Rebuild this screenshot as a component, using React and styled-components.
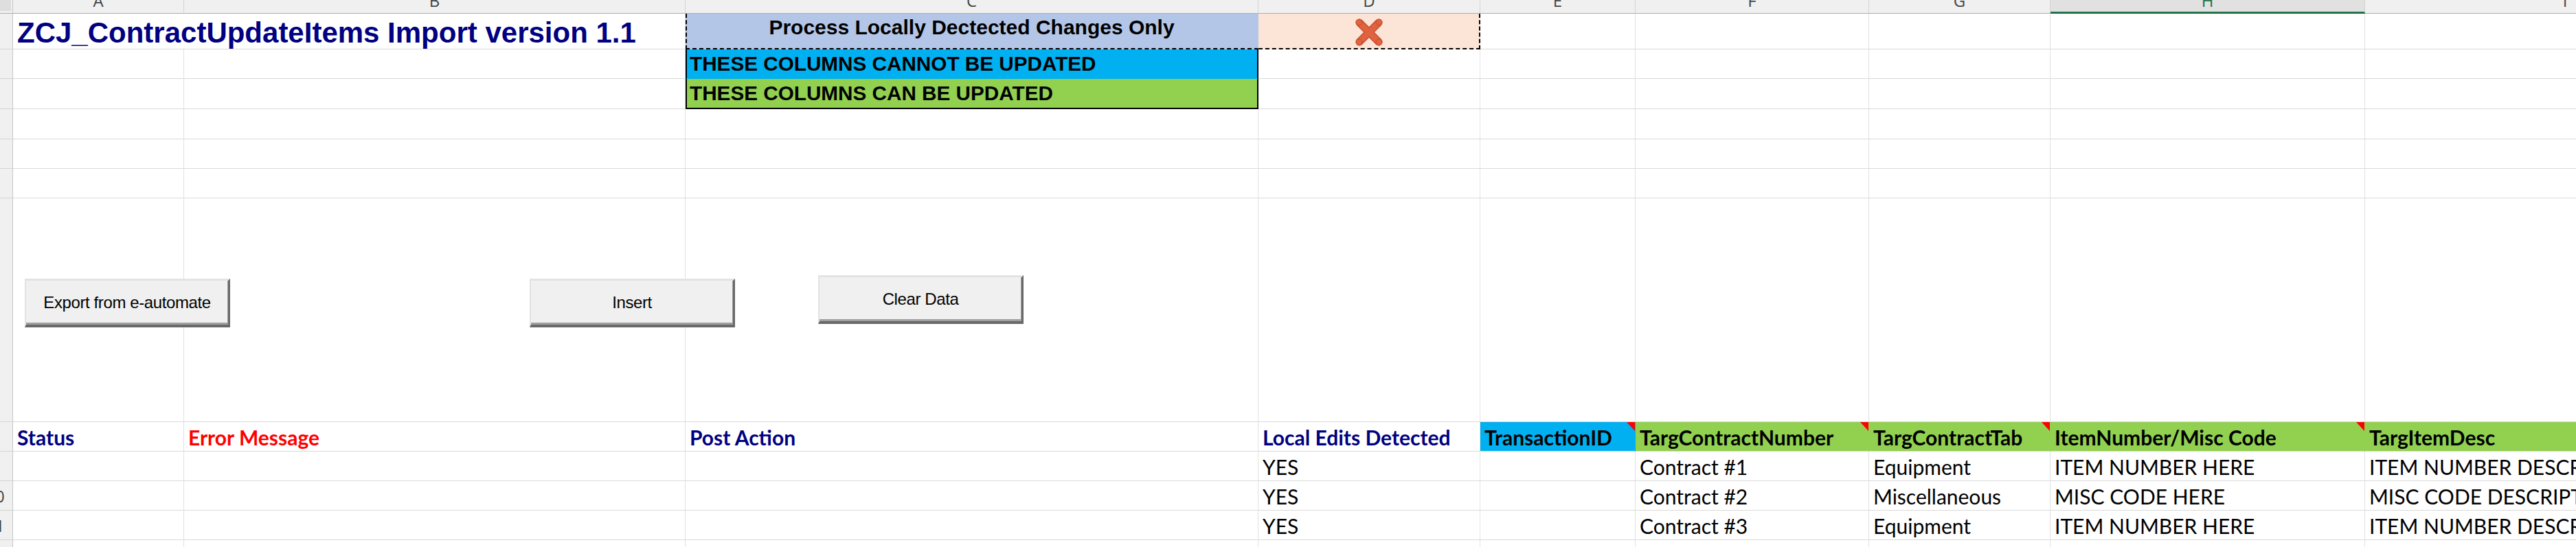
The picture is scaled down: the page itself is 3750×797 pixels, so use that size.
import styled, { createGlobalStyle } from "styled-components";

const GlobalStyle = createGlobalStyle`
  html, body {
    margin: 0;
    padding: 0;
    background: #ffffff;
    overflow: hidden;
  }
`;

// column widths: row header, A..I (I runs past the right edge of the window)
const COL_WIDTHS = [19, 249, 730, 834, 323, 226, 340, 264, 458, 583];
// row heights: column header, rows 1..12
const ROW_HEIGHTS = [20, 52, 43, 44, 44, 43, 43, 326, 43, 43, 43, 43, 43];
const LETTERS = ["A", "B", "C", "D", "E", "F", "G", "H", "I"];
const ACTIVE_COL = "H";

const NAVY = "#000080";
const CYAN = "#00b0f0";
const GREEN = "#92d050";

const SheetWrapper = styled.div`
  position: relative;
  width: 3750px;
  height: 797px;
  overflow: hidden;
  background: #fff;
`;

const Grid = styled.div`
  display: grid;
  grid-template-columns: ${COL_WIDTHS.map((w) => `${w}px`).join(" ")};
  grid-template-rows: ${ROW_HEIGHTS.map((h) => `${h}px`).join(" ")};
`;

const Corner = styled.div`
  background: #f0f0f0;
  border-right: 1px solid #c6c6c6;
  border-bottom: 1px solid #ababab;
  box-sizing: border-box;
  &::before {
    content: "";
    display: block;
    width: 16px;
    height: 16px;
    background: #dedede;
  }
`;

const ColHead = styled.div`
  box-sizing: border-box;
  background: ${(p) => (p.$active ? "#e1e1e1" : "#f0f0f0")};
  border-right: 1px solid #d4d4d4;
  border-bottom: ${(p) => (p.$active ? "3px solid #217346" : "1px solid #ababab")};
  display: flex;
  justify-content: center;
  align-items: flex-start;
  overflow: hidden;
  font-family: "Open Sans", "Liberation Sans", sans-serif;
  font-size: 24px;
  line-height: 24px;
  color: ${(p) => (p.$active ? "#217346" : "#444")};

  & span {
    margin-top: -11px;
  }
`;

const RowHead = styled.div`
  box-sizing: border-box;
  background: #f0f0f0;
  border-right: 1px solid #c6c6c6;
  border-bottom: 1px solid #d4d4d4;
  overflow: hidden;
  display: flex;
  align-items: center;
  font-family: "Open Sans", "Liberation Sans", sans-serif;
  font-size: 24px;
  color: #444;

  & span {
    flex: none;
    width: 46px;
    margin-left: -30px;
    text-align: center;
  }
`;

const Cell = styled.div`
  box-sizing: border-box;
  grid-column: span ${(p) => p.$span || 1};
  position: relative;
  min-width: 0;
  background: ${(p) => p.$bg || "#fff"};
  border-right: 1px solid ${(p) => (p.$bg ? p.$bg : "#e1e1e1")};
  border-bottom: 1px solid #d9d9d9;
  display: flex;
  align-items: ${(p) => p.$valign || "flex-end"};
  justify-content: ${(p) => p.$justify || "flex-start"};
  padding: 0 6px;
  white-space: nowrap;
  overflow: hidden;

  ${(p) =>
    p.$marquee &&
    p.$marquee.includes("l") &&
    "border-left: 2px dashed #000; padding-left: 4px;"}
  ${(p) => p.$marquee && p.$marquee.includes("b") && "border-bottom: 2px dashed #000;"}
  ${(p) => p.$marquee && p.$marquee.includes("r") && "border-right: 2px dashed #000;"}

  ${(p) =>
    p.$boxed &&
    `border-left: 2px solid #000; border-right: 2px solid #000; padding-left: 4px;`}
  ${(p) => p.$boxed === "bottom" && "border-bottom: 2px solid #000;"}
  ${(p) => p.$boxed === "top" && `border-bottom-color: ${p.$bg};`}

  ${(p) =>
    p.$note &&
    `
    &::after {
      content: "";
      position: absolute;
      top: 0;
      right: 0;
      border-top: 13px solid #ff0000;
      border-left: 12px solid transparent;
    }
  `}
`;

const Title = styled.span`
  align-self: flex-start;
  margin-top: 4px;
  font-family: "Liberation Sans", Arial, sans-serif;
  font-weight: 700;
  font-size: 42px;
  line-height: 48px;
  color: ${NAVY};
`;

const Banner = styled.span`
  align-self: flex-start;
  margin-top: 3px;
  font-family: "Liberation Sans", Arial, sans-serif;
  font-weight: 700;
  font-size: 30px;
  line-height: 34px;
  color: #000;
`;

const Legend = styled.span`
  font-family: "Liberation Sans", Arial, sans-serif;
  font-weight: 700;
  font-size: 29.7px;
  line-height: 34px;
  color: #000;
`;

const Label = styled.span`
  font-family: Lato, "Noto Sans", sans-serif;
  font-weight: ${(p) => (p.$bold ? 700 : 400)};
  font-size: 30px;
  line-height: 36px;
  padding-bottom: 2px;
  color: ${(p) => p.$color || "#000"};
`;

const CrossMark = styled.svg`
  width: 42px;
  height: 42px;
  margin-top: 6px;
`;

const SheetButton = styled.button`
  position: absolute;
  left: ${(p) => p.$x}px;
  top: ${(p) => p.$y}px;
  width: 299px;
  height: 71px;
  box-sizing: border-box;
  margin: 0;
  padding: 0;
  background: #f0f0f0;
  border-style: solid;
  border-width: 3px 3px 4px 2px;
  border-color: #e3e3e3 #696969 #696969 #e3e3e3;
  box-shadow: inset -1px -3px 0 #a0a0a0;
  font-family: "Liberation Sans", Arial, sans-serif;
  font-size: 24px;
  letter-spacing: -0.4px;
  color: #000;
  cursor: pointer;
`;

const Cross = () => (
  <CrossMark viewBox="0 0 42 42">
    <g strokeLinecap="round">
      <path d="M7 7 L35 35 M35 7 L7 35" stroke="#c24a2a" strokeWidth="11" />
      <path d="M7 7 L35 35 M35 7 L7 35" stroke="#e0633f" strokeWidth="8.5" />
    </g>
    <g fill="#e0633f" stroke="#c24a2a" strokeWidth="1">
      <circle cx="6.5" cy="6.5" r="4.5" />
      <circle cx="35.5" cy="6.5" r="4.5" />
      <circle cx="6.5" cy="35.5" r="4.5" />
      <circle cx="35.5" cy="35.5" r="4.5" />
    </g>
  </CrossMark>
);

const head = (text, color, extra = {}) => ({
  content: <Label $bold $color={color}>{text}</Label>,
  ...extra,
});
const data = (text) => ({ content: <Label>{text}</Label> });

const SHEET = {
  1: {
    A: {
      span: 2,
      content: <Title>ZCJ_ContractUpdateItems Import version 1.1</Title>,
    },
    C: {
      bg: "#b4c6e7",
      justify: "center",
      marquee: "lb",
      content: <Banner>Process Locally Dectected Changes Only</Banner>,
    },
    D: {
      bg: "#fce4d6",
      justify: "center",
      valign: "flex-start",
      marquee: "br",
      content: <Cross />,
    },
  },
  2: {
    C: {
      bg: CYAN,
      valign: "center",
      boxed: "top",
      content: <Legend>THESE COLUMNS CANNOT BE UPDATED</Legend>,
    },
  },
  3: {
    C: {
      bg: GREEN,
      valign: "center",
      boxed: "bottom",
      content: <Legend>THESE COLUMNS CAN BE UPDATED</Legend>,
    },
  },
  8: {
    A: head("Status", NAVY),
    B: head("Error Message", "#ff0000"),
    C: head("Post Action", NAVY),
    D: head("Local Edits Detected", NAVY),
    E: head("TransactionID", "#000", { bg: CYAN, note: true }),
    F: head("TargContractNumber", "#000", { bg: GREEN, note: true }),
    G: head("TargContractTab", "#000", { bg: GREEN, note: true }),
    H: head("ItemNumber/Misc Code", "#000", { bg: GREEN, note: true }),
    I: head("TargItemDesc", "#000", { bg: GREEN, note: true }),
  },
  9: {
    D: data("YES"),
    F: data("Contract #1"),
    G: data("Equipment"),
    H: data("ITEM NUMBER HERE"),
    I: data("ITEM NUMBER DESCRIPTION HERE"),
  },
  10: {
    D: data("YES"),
    F: data("Contract #2"),
    G: data("Miscellaneous"),
    H: data("MISC CODE HERE"),
    I: data("MISC CODE DESCRIPTION HERE"),
  },
  11: {
    D: data("YES"),
    F: data("Contract #3"),
    G: data("Equipment"),
    H: data("ITEM NUMBER HERE"),
    I: data("ITEM NUMBER DESCRIPTION HERE"),
  },
};

const BUTTONS = [
  { label: "Export from e-automate", x: 36, y: 406 },
  { label: "Insert", x: 771, y: 406 },
  { label: "Clear Data", x: 1191, y: 401 },
];

function renderRow(rowNum) {
  const row = SHEET[rowNum] || {};
  const out = [
    <RowHead key={`h${rowNum}`}>
      <span>{rowNum}</span>
    </RowHead>,
  ];
  let skip = 0;
  LETTERS.forEach((letter) => {
    if (skip > 0) {
      skip -= 1;
      return;
    }
    const cell = row[letter] || {};
    if (cell.span) skip = cell.span - 1;
    out.push(
      <Cell
        key={`${letter}${rowNum}`}
        $span={cell.span}
        $bg={cell.bg}
        $justify={cell.justify}
        $valign={cell.valign}
        $marquee={cell.marquee}
        $boxed={cell.boxed}
        $note={cell.note}
      >
        {cell.content}
      </Cell>
    );
  });
  return out;
}

export default function App() {
  const rowNums = Array.from({ length: ROW_HEIGHTS.length - 1 }, (_, i) => i + 1);
  return (
    <>
      <GlobalStyle />
      <SheetWrapper>
        <Grid>
          <Corner />
          {LETTERS.map((l) => (
            <ColHead key={l} $active={l === ACTIVE_COL}>
              <span>{l}</span>
            </ColHead>
          ))}
          {rowNums.map((r) => renderRow(r))}
        </Grid>
        {BUTTONS.map((b) => (
          <SheetButton key={b.label} $x={b.x} $y={b.y}>
            {b.label}
          </SheetButton>
        ))}
      </SheetWrapper>
    </>
  );
}
